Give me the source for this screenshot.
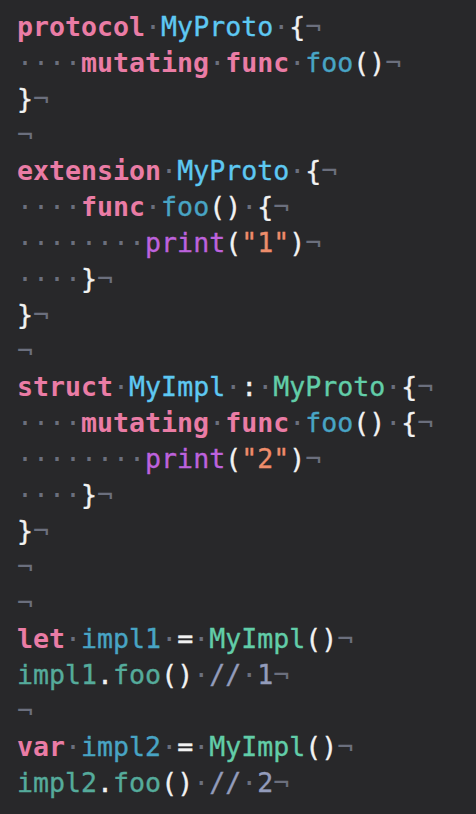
import React from "react"

type Tok = [string, string]

// heavier than DejaVu's Book weight, closer to the editor's medium face
const med = "[-webkit-text-stroke:0.35px]"

const kw = "text-[#ea7ca5] font-bold"
const tdecl = `text-[#5ec8f2] ${med}`
const odecl = `text-[#48a4c4] ${med}`
const ptype = `text-[#62cda8] ${med}`
const pvar = `text-[#55ab9b] ${med}`
const fn = `text-[#bd62dd] ${med}`
const str = `text-[#ee8d6b] ${med}`
const cm = `text-[#939cbb] ${med}`
const pl = `text-[#f2f2f2] ${med}`
const ws = "text-[#6b6f7d]"

const sp: Tok = [ws, "·"]
const ind4: Tok = [ws, "····"]
const ind8: Tok = [ws, "········"]

const lines: Tok[][] = [
  [[kw, "protocol"], sp, [tdecl, "MyProto"], sp, [pl, "{"]],
  [ind4, [kw, "mutating"], sp, [kw, "func"], sp, [odecl, "foo"], [pl, "()"]],
  [[pl, "}"]],
  [],
  [[kw, "extension"], sp, [tdecl, "MyProto"], sp, [pl, "{"]],
  [ind4, [kw, "func"], sp, [odecl, "foo"], [pl, "()"], sp, [pl, "{"]],
  [ind8, [fn, "print"], [pl, "("], [str, "\"1\""], [pl, ")"]],
  [ind4, [pl, "}"]],
  [[pl, "}"]],
  [],
  [[kw, "struct"], sp, [tdecl, "MyImpl"], sp, [pl, ":"], sp, [ptype, "MyProto"], sp, [pl, "{"]],
  [ind4, [kw, "mutating"], sp, [kw, "func"], sp, [odecl, "foo"], [pl, "()"], sp, [pl, "{"]],
  [ind8, [fn, "print"], [pl, "("], [str, "\"2\""], [pl, ")"]],
  [ind4, [pl, "}"]],
  [[pl, "}"]],
  [],
  [],
  [[kw, "let"], sp, [odecl, "impl1"], sp, [pl, "="], sp, [ptype, "MyImpl"], [pl, "()"]],
  [[pvar, "impl1"], [pl, "."], [pvar, "foo"], [pl, "()"], sp, [cm, "//"], sp, [cm, "1"]],
  [],
  [[kw, "var"], sp, [odecl, "impl2"], sp, [pl, "="], sp, [ptype, "MyImpl"], [pl, "()"]],
  [[pvar, "impl2"], [pl, "."], [pvar, "foo"], [pl, "()"], sp, [cm, "//"], sp, [cm, "2"]],
]

export default function App() {
  return (
    <div className="min-h-screen w-full bg-[#28282a] pl-[17px] pt-[9px] font-['DejaVu_Sans_Mono',monospace] text-[26.6px] leading-[36px] whitespace-pre">
      {lines.map((line, i) => (
        <div key={i} className="h-[36px]">
          {line.map(([cls, text], j) => (
            <span key={j} className={cls}>{text}</span>
          ))}
          <span className={ws}>¬</span>
        </div>
      ))}
    </div>
  )
}
